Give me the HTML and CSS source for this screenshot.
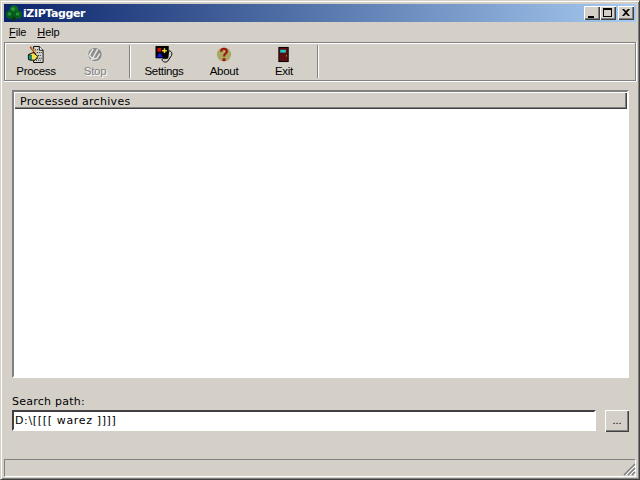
FILE: index.html
```html
<!DOCTYPE html>
<html>
<head>
<meta charset="utf-8">
<title>iZIPTagger</title>
<link rel="stylesheet" href="styles.css">
</head>
<body>
<div class="window">
  <div class="titlebar">
    <svg class="app-icon" width="16" height="16" viewBox="0 0 16 16"><path d="M7 9l1 0 2 6-4 1z" fill="#0a3a12"/><circle cx="8" cy="4.500" r="4.300" fill="#0c6a22"/><circle cx="4" cy="9.500" r="4.200" fill="#0a5a1c"/><circle cx="12" cy="9.500" r="4.200" fill="#0a5a1c"/><circle cx="7" cy="4" r="1.800" fill="#2ca040"/><circle cx="3.500" cy="9" r="1.800" fill="#1f9034"/><circle cx="11.500" cy="9" r="1.800" fill="#1f9034"/></svg>
    <span class="title-text">iZIPTagger</span>
    <div class="caption-buttons">
      <div class="cap-btn"><svg width="14" height="12" viewBox="0 0 14 12"><rect x="3" y="9" width="6" height="2" fill="#000"/></svg></div>
      <div class="cap-btn"><svg width="14" height="12" viewBox="0 0 14 12"><path d="M2 1h9v9h-9z M3 3v6h7v-6z" fill="#000" fill-rule="evenodd"/></svg></div>
      <div class="cap-btn cap-close"><svg width="14" height="12" viewBox="0 0 14 12"><path d="M3 2h2l2 2 2-2h2l-3 3.500 3 3.500h-2l-2-2-2 2h-2l3-3.500z" fill="#000"/></svg></div>
    </div>
  </div>
  <div class="menubar">
    <span class="menu-item"><u>F</u>ile</span>
    <span class="menu-item"><u>H</u>elp</span>
  </div>
  <div class="toolbar">
    <div class="tool tool-first">
      <svg width="20" height="18" viewBox="0 0 20 18"><path d="M7.500 .5h6l4 4v13h-10z" fill="#d8d8d0" stroke="#000"/><path d="M13.500 .5v4h4" fill="#fff" stroke="#000"/><path d="M9 4h3M11 7h5M12 10h4M11 13h5M10 15h6" stroke="#000" stroke-dasharray="1 1"/><path d="M2 9l5-2 5 4-3 4-5 0-2-1z" fill="#f4e04a" stroke="#000"/><path d="M2 9.500h3v5h-3z" fill="#00a0a0" stroke="#000" stroke-width=".6"/><path d="M4 1l6 7" stroke="#a02020" stroke-width="2"/><path d="M5 1.500l5 6" stroke="#f4e04a"/></svg>
      <span class="tool-label">Process</span>
    </div>
    <div class="tool tool-disabled">
      <svg width="20" height="18" viewBox="0 0 20 18"><circle cx="10" cy="9" r="7.500" fill="#8c8c8c" stroke="#e8e8e4" stroke-width=".6"/><path d="M8 3l-4 7 4 4M13 3l-6 11 5-1 3-5" fill="none" stroke="#e8e8e4" stroke-width="1.600"/></svg>
      <span class="tool-label">Stop</span>
    </div>
    <div class="tool-sep"></div>
    <div class="tool tool-settings">
      <svg width="20" height="18" viewBox="0 0 20 18"><rect x="1" y="0" width="14" height="13" fill="#000"/><rect x="3" y="2" width="4" height="4" fill="#d01010"/><path d="M8 5h5M10.500 2.500v5" stroke="#f0e020" stroke-width="1.500"/><path d="M2 12l3.500-5 3.500 5z" fill="#1818d0"/><path d="M15 5c3 0 4 3 3 5l-4 6c-2 2-6 1-6-2l1-1 5 0z" fill="#d4d0c8" stroke="#000"/><path d="M11 14l3-3" stroke="#000"/></svg>
      <span class="tool-label">Settings</span>
    </div>
    <div class="tool">
      <svg width="20" height="18" viewBox="0 0 20 18"><circle cx="10" cy="9" r="7.500" fill="#a8a860"/><path d="M7 6c0-4 6-4 6 0 0 2-3 2-3 5" fill="none" stroke="#a01010" stroke-width="2.200"/><rect x="8.500" y="13" width="3" height="3" fill="#a01010"/></svg>
      <span class="tool-label">About</span>
    </div>
    <div class="tool">
      <svg width="20" height="18" viewBox="0 0 20 18"><rect x="4" y="1" width="11" height="16" fill="#000"/><rect x="5" y="2" width="9" height="14" fill="#5a1010"/><rect x="6" y="4" width="6" height="3" fill="#20c8c8"/><rect x="12" y="10" width="1" height="1" fill="#f0e020"/></svg>
      <span class="tool-label">Exit</span>
    </div>
    <div class="tool-sep tool-sep-end"></div>
  </div>
  <div class="content">
    <div class="list">
      <div class="list-header"><span>Processed archives</span></div>
      <div class="list-body"></div>
    </div>
    <div class="search-label">Search path:</div>
    <div class="search-row">
      <div class="search-input">D:\[[[[ warez ]]]]</div>
      <div class="browse-btn">...</div>
    </div>
  </div>
  <div class="statusbar">
    <div class="status-pane"></div>
    <svg class="grip" width="13" height="13" viewBox="0 0 13 13"><path d="M12 1L1 12M12 5L5 12M12 9L9 12" stroke="#808080" stroke-width="1.500"/><path d="M12 3L3 12M12 7L7 12M12 11L11 12" stroke="#fff"/></svg>
  </div>
</div>
</body>
</html>
```
FILE: styles.css
```css
html, body {
  margin: 0;
  padding: 0;
  width: 640px;
  height: 480px;
  overflow: hidden;
  background: #d4d0c8;
}
.window {
  box-sizing: border-box;
  width: 640px;
  height: 480px;
  display: flex;
  flex-direction: column;
  padding: 3px 3px 2px 3px;
  background: #d4d0c8;
  border-style: solid;
  border-width: 1px;
  border-color: #d4d0c8 #404040 #404040 #d4d0c8;
  box-shadow: inset 1px 1px 0 #fff, inset -1px -1px 0 #808080;
  font-family: "Liberation Sans", Arial, sans-serif;
  font-size: 11px;
  color: #000;
}
.titlebar {
  height: 18px;
  display: flex;
  align-items: center;
  padding-left: 2px;
  background: linear-gradient(to right, #0a246a, #a6caf0);
  flex: none;
}
.app-icon { flex: none; margin-right: 1px; }
.title-text {
  font-family: "DejaVu Sans", sans-serif;
  font-weight: bold;
  font-size: 11px;
  color: #fff;
  letter-spacing: -0.4px;
}
.caption-buttons {
  margin-left: auto;
  margin-right: 2px;
  display: flex;
}
.cap-btn {
  box-sizing: border-box;
  width: 16px;
  height: 14px;
  background: #d4d0c8;
  box-shadow: inset 1px 1px 0 #fff, inset -1px -1px 0 #404040, inset -2px -2px 0 #808080;
  display: flex;
  align-items: flex-start;
  justify-content: center;
  padding-top: 1px;
}
.cap-close { margin-left: 2px; }
.menubar {
  height: 20px;
  display: flex;
  align-items: center;
  flex: none;
  padding-left: 5px;
  gap: 11px;
  font-size: 11px;
  letter-spacing: -0.1px;
}
.toolbar {
  box-sizing: border-box;
  height: 39px;
  flex: none;
  display: flex;
  align-items: flex-start;
  padding: 2px 0 0 0;
  border: 1px solid #808080;
  box-shadow: inset 1px 1px 0 #fff, 0 1px 0 #fff, 1px 0 0 #fff;
}
.tool {
  box-sizing: border-box;
  width: 60px;
  height: 33px;
  display: flex;
  flex-direction: column;
  align-items: center;
  flex: none;
}
.tool-first { padding-left: 2px; }
.tool svg { display: block; height: 18px; margin-top: 1px; }
.tool-label {
  font-size: 11.5px;
  letter-spacing: -0.3px;
  line-height: 14px;
  margin-top: 1px;
}
.tool-disabled .tool-label {
  color: #808080;
  text-shadow: 1px 1px 0 #fff;
}
.tool-settings { margin-left: 1px; }
.tool-sep {
  width: 1px;
  height: 33px;
  background: #808080;
  box-shadow: 1px 0 0 #fff;
  margin: 0 3px 0 4px;
  flex: none;
}
.tool-sep-end { margin-left: 3px; }
.content {
  flex: 1;
  display: flex;
  flex-direction: column;
  padding: 9px 7px 0 8px;
  min-height: 0;
}
.list {
  box-sizing: border-box;
  height: 288px;
  flex: none;
  display: flex;
  flex-direction: column;
  background: #fff;
  border: 2px solid;
  border-color: #808080 #fff #fff #808080;
  box-shadow: inset 1px 1px 0 #404040;
}
.list-header {
  box-sizing: border-box;
  height: 17px;
  flex: none;
  background: #d4d0c8;
  font-family: "DejaVu Sans", sans-serif;
  font-size: 11px;
  letter-spacing: 0.3px;
  line-height: 19px;
  padding-left: 6px;
  box-shadow: inset 1px 1px 0 #fff, inset -1px -1px 0 #404040, inset -2px -2px 0 #808080;
}
.list-body { flex: 1; background: #fff; }
.search-label {
  font-family: "DejaVu Sans", sans-serif;
  font-size: 11px;
  letter-spacing: 0.25px;
  line-height: 14px;
  margin-top: 17px;
}
.search-row {
  display: flex;
  align-items: flex-start;
  margin-top: 1px;
}
.search-input {
  box-sizing: border-box;
  width: 584px;
  height: 21px;
  background: #fff;
  border: 2px solid;
  border-color: #404040 #fff #fff #404040;
  font-family: "DejaVu Sans", sans-serif;
  font-size: 11px;
  letter-spacing: 0.65px;
  line-height: 18px;
  padding-left: 1px;
}
.browse-btn {
  box-sizing: border-box;
  width: 24px;
  height: 22px;
  margin-left: 9px;
  background: #d4d0c8;
  text-align: center;
  font-size: 11px;
  line-height: 20px;
  box-shadow: inset 1px 1px 0 #fff, inset -1px -1px 0 #404040, inset -2px -2px 0 #808080;
}
.statusbar {
  position: relative;
  margin-top: auto;
  height: 18px;
  flex: none;
  display: flex;
}
.status-pane {
  flex: 1;
  box-sizing: border-box;
  border: 1px solid;
  border-color: #808080 #fff #fff #808080;
}
.grip {
  position: absolute;
  right: 0;
  bottom: 1px;
}
```
